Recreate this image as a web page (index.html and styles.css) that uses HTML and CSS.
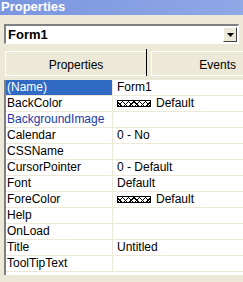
FILE: index.html
```html
<!DOCTYPE html>
<html>
<head>
<title>Properties</title>
<link rel="stylesheet" href="styles.css">
</head>
<body>
<div class="titlebar">Properties</div>
<div class="combo">
  <span class="combo-text">Form1</span>
  <span class="combo-btn"><svg width="7" height="4" viewBox="0 0 7 4"><path d="M0 0H7L3.5 4Z" fill="#000"/></svg></span>
</div>
<div class="tabs">
  <div class="tab">Properties</div>
  <div class="tab-sep"></div>
  <div class="tab tab-events">Events</div>
</div>
<div class="grid">
  <div class="row sel"><div class="name">(Name)</div><div class="val">Form1</div></div>
  <div class="row"><div class="name">BackColor</div><div class="val"><span class="swatch"></span>Default</div></div>
  <div class="row"><div class="name link">BackgroundImage</div><div class="val"></div></div>
  <div class="row"><div class="name">Calendar</div><div class="val">0 - No</div></div>
  <div class="row"><div class="name">CSSName</div><div class="val"></div></div>
  <div class="row"><div class="name">CursorPointer</div><div class="val">0 - Default</div></div>
  <div class="row"><div class="name">Font</div><div class="val">Default</div></div>
  <div class="row"><div class="name">ForeColor</div><div class="val"><span class="swatch"></span>Default</div></div>
  <div class="row"><div class="name">Help</div><div class="val"></div></div>
  <div class="row"><div class="name">OnLoad</div><div class="val"></div></div>
  <div class="row"><div class="name">Title</div><div class="val">Untitled</div></div>
  <div class="row"><div class="name">ToolTipText</div><div class="val"></div></div>
</div>
</body>
</html>
```
FILE: styles.css
```css
body {
  margin: 0;
  background: #ece9d8;
  font-family: "Liberation Sans", Arial, sans-serif;
  font-size: 12px;
  color: #000;
  width: 243px;
  height: 282px;
  overflow: hidden;
}
.titlebar {
  height: 15px;
  background: linear-gradient(to right, #7a96df, #8fa8e6);
  color: #fff;
  font-weight: bold;
  font-size: 13px;
  line-height: 14px;
  padding-left: 1px;
}
.combo {
  margin: 9px 4px 0 4px;
  height: 20px;
  box-sizing: border-box;
  background: #fff;
  border-top: 2px solid #808080;
  border-left: 2px solid #808080;
  border-bottom: 1px solid #fff;
  border-right: 1px solid #fff;
  display: flex;
  align-items: center;
  justify-content: space-between;
}
.combo-text {
  font-weight: bold;
  font-size: 13px;
  padding-left: 2px;
}
.combo-btn {
  width: 14px;
  height: 15px;
  margin-right: 1px;
  box-sizing: border-box;
  background: #ece9d8;
  border-top: 1px solid #fff;
  border-left: 1px solid #fff;
  border-right: 1px solid #404040;
  border-bottom: 1px solid #404040;
  display: flex;
  align-items: center;
  justify-content: center;
}
.tabs {
  margin: 7px 0 0 5px;
  display: flex;
  height: 25px;
}
.tab {
  flex: 0 0 141px;
  box-sizing: border-box;
  border-top: 1px solid #fff;
  border-left: 1px solid #fff;
  border-bottom: 1px solid #fff;
  text-align: center;
  line-height: 27px;
}
.tab-sep {
  width: 1px;
  background: #000;
  margin-top: -2px;
}
.tab-events {
  flex: 1;
  margin-left: 4px;
  text-align: right;
  padding-right: 7px;
}
.grid {
  margin: 4px 0 0 4px;
  border-left: 2px solid #808080;
  background: #fff;
  height: 195px;
}
.row {
  display: flex;
  height: 16px;
  box-sizing: border-box;
  border-bottom: 1px solid #ece9d8;
  line-height: 15px;
}
.name {
  width: 105px;
  padding-left: 1px;
  border-right: 1px solid #ece9d8;
  white-space: nowrap;
  overflow: hidden;
}
.val {
  flex: 1;
  padding-left: 4px;
  white-space: nowrap;
  display: flex;
  align-items: center;
}
.sel .name {
  background: #316ac5;
  color: #fff;
}
.link {
  color: #1c3aa6;
}
.swatch {
  width: 34px;
  height: 7px;
  box-sizing: border-box;
  border: 1px solid #000;
  margin-right: 5px;
  background:
    repeating-linear-gradient(45deg, transparent 0 2px, #000 2px 3px, transparent 3px 4px),
    repeating-linear-gradient(-45deg, #fff 0 2px, #000 2px 3px, #fff 3px 4px);
}
```
